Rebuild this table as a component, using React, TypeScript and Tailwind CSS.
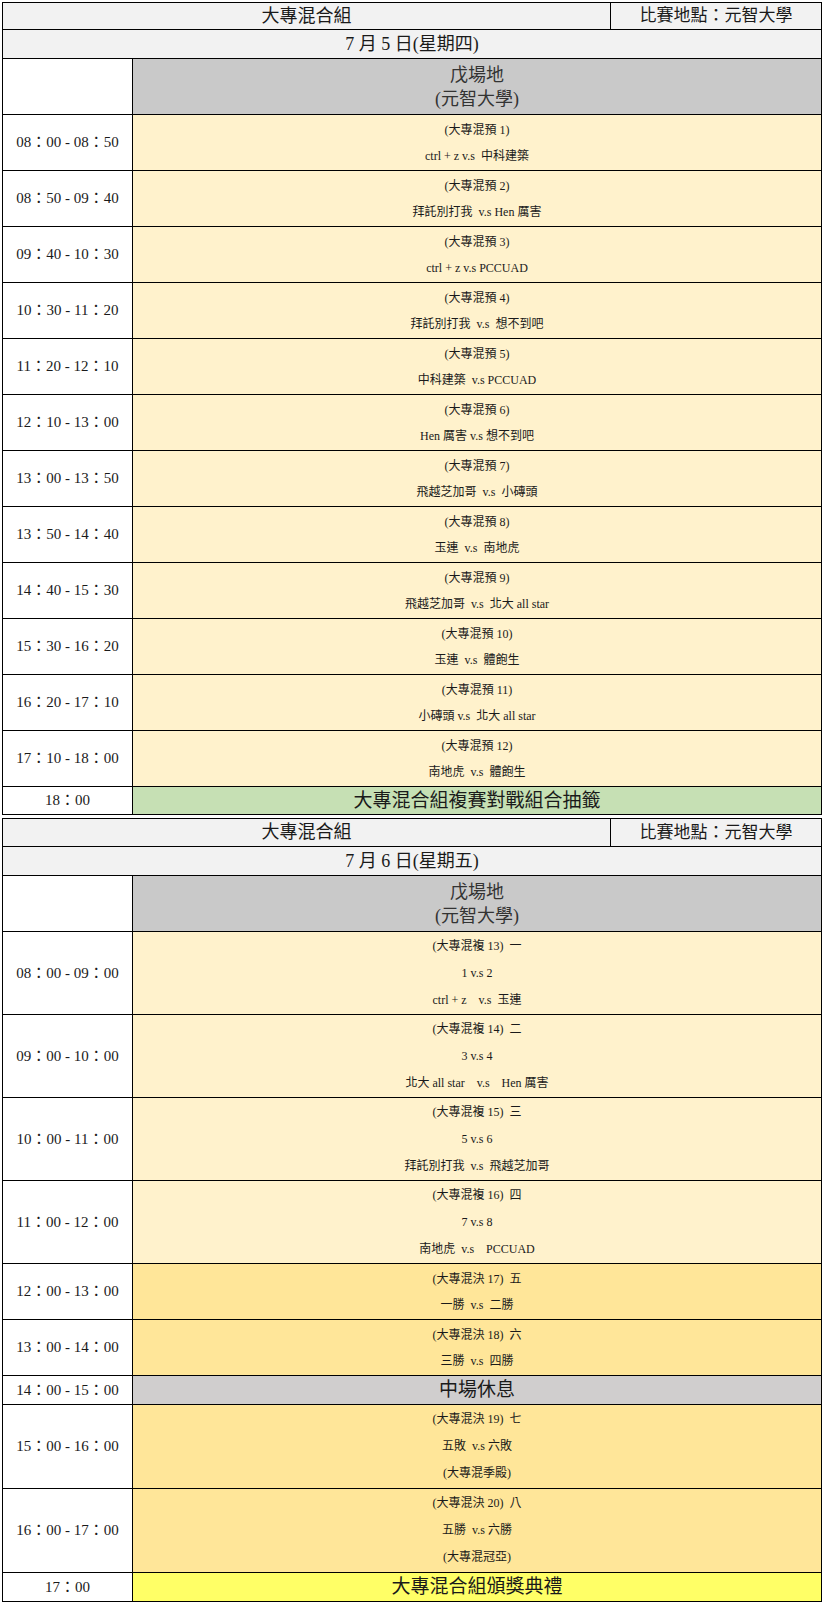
const FONT = "font-['Liberation_Serif','Noto_Sans_CJK_TC',serif]"

type Row = {
  time: string
  lines: string[]
  h: string
  bg: string
  big?: boolean
  lead?: string
}

const DAY1: Row[] = [
  { time: '08：00 - 08：50', lines: ['(大專混預 1)', 'ctrl + z v.s  中科建築'], h: 'h-[56px]', bg: 'bg-[#fff2cc]' },
  { time: '08：50 - 09：40', lines: ['(大專混預 2)', '拜託別打我  v.s Hen 厲害'], h: 'h-[56px]', bg: 'bg-[#fff2cc]' },
  { time: '09：40 - 10：30', lines: ['(大專混預 3)', 'ctrl + z v.s PCCUAD'], h: 'h-[56px]', bg: 'bg-[#fff2cc]' },
  { time: '10：30 - 11：20', lines: ['(大專混預 4)', '拜託別打我  v.s  想不到吧'], h: 'h-[56px]', bg: 'bg-[#fff2cc]' },
  { time: '11：20 - 12：10', lines: ['(大專混預 5)', '中科建築  v.s PCCUAD'], h: 'h-[56px]', bg: 'bg-[#fff2cc]' },
  { time: '12：10 - 13：00', lines: ['(大專混預 6)', 'Hen 厲害 v.s 想不到吧'], h: 'h-[56px]', bg: 'bg-[#fff2cc]' },
  { time: '13：00 - 13：50', lines: ['(大專混預 7)', '飛越芝加哥  v.s  小磚頭'], h: 'h-[56px]', bg: 'bg-[#fff2cc]' },
  { time: '13：50 - 14：40', lines: ['(大專混預 8)', '玉連  v.s  南地虎'], h: 'h-[56px]', bg: 'bg-[#fff2cc]' },
  { time: '14：40 - 15：30', lines: ['(大專混預 9)', '飛越芝加哥  v.s  北大 all star'], h: 'h-[56px]', bg: 'bg-[#fff2cc]' },
  { time: '15：30 - 16：20', lines: ['(大專混預 10)', '玉連  v.s  體飽生'], h: 'h-[56px]', bg: 'bg-[#fff2cc]' },
  { time: '16：20 - 17：10', lines: ['(大專混預 11)', '小磚頭 v.s  北大 all star'], h: 'h-[56px]', bg: 'bg-[#fff2cc]' },
  { time: '17：10 - 18：00', lines: ['(大專混預 12)', '南地虎  v.s  體飽生'], h: 'h-[56px]', bg: 'bg-[#fff2cc]' },
  { time: '18：00', lines: ['大專混合組複賽對戰組合抽籤'], h: 'h-[27px]', bg: 'bg-[#c6e0b4]', big: true },
]

const DAY2: Row[] = [
  { time: '08：00 - 09：00', lines: ['(大專混複 13)  一', '1 v.s 2', 'ctrl + z    v.s  玉連'], h: 'h-[83px]', bg: 'bg-[#fff2cc]', lead: 'leading-[27px]' },
  { time: '09：00 - 10：00', lines: ['(大專混複 14)  二', '3 v.s 4', '北大 all star    v.s    Hen 厲害'], h: 'h-[83px]', bg: 'bg-[#fff2cc]', lead: 'leading-[27px]' },
  { time: '10：00 - 11：00', lines: ['(大專混複 15)  三', '5 v.s 6', '拜託別打我  v.s  飛越芝加哥'], h: 'h-[83px]', bg: 'bg-[#fff2cc]', lead: 'leading-[27px]' },
  { time: '11：00 - 12：00', lines: ['(大專混複 16)  四', '7 v.s 8', '南地虎  v.s    PCCUAD'], h: 'h-[83px]', bg: 'bg-[#fff2cc]', lead: 'leading-[27px]' },
  { time: '12：00 - 13：00', lines: ['(大專混決 17)  五', '一勝  v.s  二勝'], h: 'h-[56px]', bg: 'bg-[#ffe699]' },
  { time: '13：00 - 14：00', lines: ['(大專混決 18)  六', '三勝  v.s  四勝'], h: 'h-[56px]', bg: 'bg-[#ffe699]' },
  { time: '14：00 - 15：00', lines: ['中場休息'], h: 'h-[29px]', bg: 'bg-[#d0cece]', big: true },
  { time: '15：00 - 16：00', lines: ['(大專混決 19)  七', '五敗  v.s 六敗', '(大專混季殿)'], h: 'h-[84px]', bg: 'bg-[#ffe699]', lead: 'leading-[27px]' },
  { time: '16：00 - 17：00', lines: ['(大專混決 20)  八', '五勝  v.s 六勝', '(大專混冠亞)'], h: 'h-[84px]', bg: 'bg-[#ffe699]', lead: 'leading-[27px]' },
  { time: '17：00', lines: ['大專混合組頒獎典禮'], h: 'h-[28px]', bg: 'bg-[#ffff66]', big: true },
]

function Schedule({ date, rows, titleH }: { date: string; rows: Row[]; titleH: string }) {
  return (
    <div className="w-[820px] border border-black divide-y divide-black text-[#1a1a1a]">
      {/* title */}
      <div className={`flex ${titleH} bg-[#f2f2f2]`}>
        <div className="w-[608px] border-r border-black flex items-center justify-center text-[18px]">大專混合組</div>
        <div className="flex-1 flex items-center justify-center text-[17px]">比賽地點：元智大學</div>
      </div>
      <div className="h-[29px] bg-[#f2f2f2] flex items-center justify-center text-[18px]">{date}</div>
      {/* venue */}
      <div className="flex h-[56px]">
        <div className="w-[130px] border-r border-black bg-white" />
        <div className="flex-1 bg-[#c9c9c9] flex flex-col items-center justify-center text-[18px] leading-[24px] text-[#333]">
          <span>戊場地</span>
          <span>(元智大學)</span>
        </div>
      </div>
      {rows.map((r) => (
        <div key={r.time} className={`flex ${r.h}`}>
          <div className="w-[130px] border-r border-black bg-white flex items-center justify-center text-[15px]">
            {r.time}
          </div>
          <div
            className={`flex-1 ${r.bg} flex flex-col items-center justify-center whitespace-pre ${
              r.big ? 'text-[19px] leading-[24px]' : `text-[12px] ${r.lead ?? 'leading-[26px]'}`
            }`}
          >
            {r.lines.map((l) => (
              <span key={l}>{l}</span>
            ))}
          </div>
        </div>
      ))}
    </div>
  )
}

export default function App() {
  return (
    <div className={`${FONT} bg-white w-[826px] pl-[2px] pt-[2px] flex flex-col gap-[3px]`}>
      <Schedule date="7 月 5 日(星期四)" rows={DAY1} titleH="h-[27px]" />
      <Schedule date="7 月 6 日(星期五)" rows={DAY2} titleH="h-[28px]" />
    </div>
  )
}
